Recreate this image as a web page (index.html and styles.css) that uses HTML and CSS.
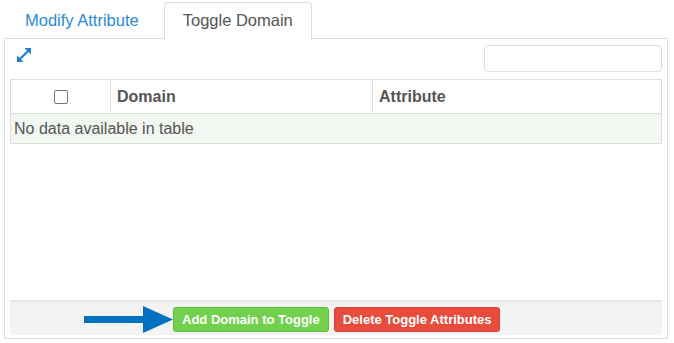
FILE: index.html
```html
<!DOCTYPE html>
<html lang="en">
<head>
    <meta charset="UTF-8">
    <title>Toggle Domain</title>
    <link rel="stylesheet" href="styles.css">
</head>
<body>

<div class="tabs">
    <div class="tab">Modify Attribute</div>
    <div class="tab active">Toggle Domain</div>
</div>

<div class="panel">
    <div class="toolbar">
        <svg class="expand" width="16" height="16" viewBox="0 0 16 16">
            <line x1="4" y1="12" x2="12" y2="4" stroke="#1b7fd4" stroke-width="2.2"/>
            <polygon points="1,15 1,8.5 7.5,15" fill="#1b7fd4"/>
            <polygon points="15,1 8.5,1 15,7.5" fill="#1b7fd4"/>
        </svg>
        <input type="text" class="search">
    </div>

    <table class="grid">
        <thead>
            <tr>
                <th class="check"><span class="box"></span></th>
                <th class="domain">Domain</th>
                <th>Attribute</th>
            </tr>
        </thead>
        <tbody>
            <tr>
                <td colspan="3">No data available in table</td>
            </tr>
        </tbody>
    </table>

    <div class="spacer"></div>

    <div class="footer">
        <svg class="arrow" width="89" height="28" viewBox="0 0 89 28">
            <rect x="0" y="10" width="62" height="7" fill="#0070c0"/>
            <polygon points="59,0 89,13.5 59,27" fill="#0070c0"/>
        </svg>
        <button class="btn green">Add Domain to Toggle</button>
        <button class="btn red">Delete Toggle Attributes</button>
    </div>
</div>

</body>
</html>
```

FILE: styles.css
```css
body {
    margin: 0;
    padding: 2px 0 0 4px;
    font-family: "Liberation Sans", Arial, sans-serif;
    background: white;
    color: #555;
}
.tabs {
    display: flex;
    height: 36px;
    position: relative;
    z-index: 1;
}
.tab {
    padding: 0 19px;
    line-height: 34px;
    font-size: 16.5px;
    color: #2a8ad6;
    margin-right: 5px;
    margin-left: 1px;
    border: 1px solid transparent;
    border-bottom: none;
}
.tab.active {
    color: #555;
    background: white;
    border-color: #ddd;
    border-radius: 4px 4px 0 0;
    height: 37px;
    margin-left: 0;
    padding: 0 18px;
}
.panel {
    width: 664px;
    height: 301px;
    border: 1px solid #ddd;
    padding: 6px 5px 3px 5px;
    box-sizing: border-box;
    display: flex;
    flex-direction: column;
}
.toolbar {
    display: flex;
    justify-content: space-between;
    align-items: flex-start;
    height: 34px;
}
.expand {
    margin: 2px 0 0 6px;
}
.search {
    width: 178px;
    height: 27px;
    box-sizing: border-box;
    border: 1px solid #ddd;
    border-radius: 4px;
}
.grid {
    width: 100%;
    border-collapse: collapse;
    border: 1px solid #ddd;
    font-size: 16px;
}
.grid th {
    height: 33px;
    text-align: left;
    padding: 0 6px;
    border-left: 1px solid #ddd;
    color: #555;
}
.grid th.check {
    width: 99px;
    text-align: center;
    padding: 0;
    border-left: none;
}
.grid th.domain {
    width: 249px;
}
.box {
    display: inline-block;
    width: 12px;
    height: 12px;
    border: 1px solid #777;
    border-radius: 2px;
    vertical-align: middle;
}
.grid td {
    height: 29px;
    padding: 0 3px;
    background: #f2f7f2;
    border-top: 1px solid #ddd;
}
.spacer {
    flex: 1;
}
.footer {
    display: flex;
    align-items: center;
    height: 35px;
    box-sizing: border-box;
    border-top: 2px solid #e6e6e6;
    background: #f3f3f3;
    border-radius: 0 0 4px 4px;
    padding-top: 2px;
}
.arrow {
    margin-left: 74px;
}
.btn {
    height: 25px;
    padding: 0 8px;
    font-family: "Liberation Sans", Arial, sans-serif;
    font-size: 13px;
    font-weight: bold;
    color: white;
    border-radius: 3px;
    margin-right: 5px;
    cursor: pointer;
}
.green {
    background: #72d14c;
    border: 1px solid #62bd3f;
}
.red {
    background: #e74c3c;
    border: 1px solid #d24334;
}
```
